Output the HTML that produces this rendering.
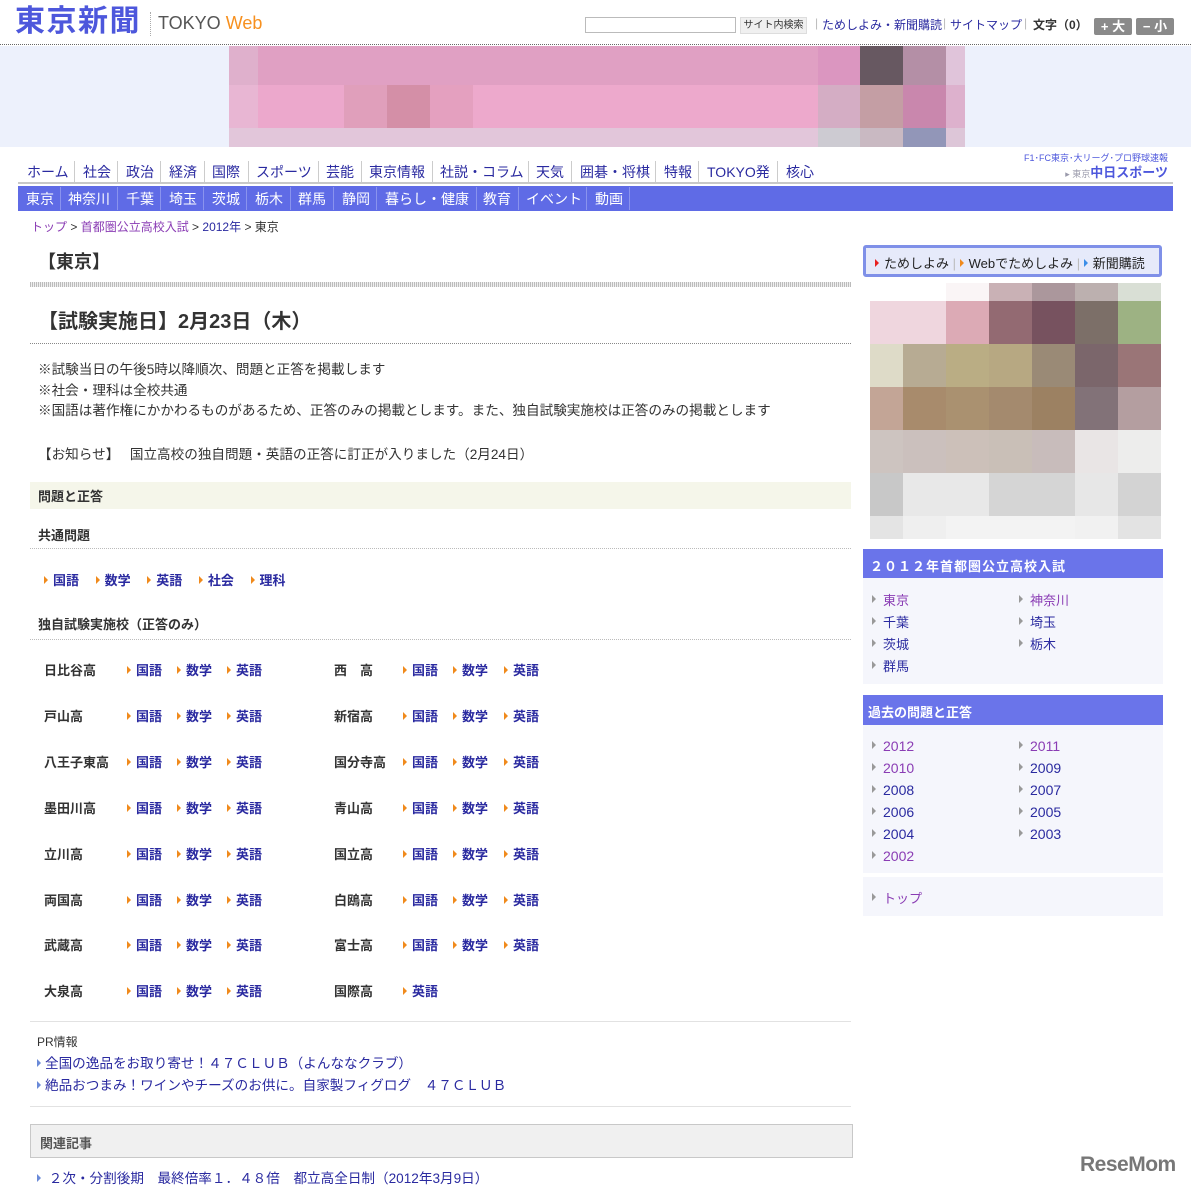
<!DOCTYPE html>
<html><head><meta charset="utf-8">
<style>
*{margin:0;padding:0;box-sizing:border-box}
body{width:1191px;height:1191px;position:relative;background:#fff;font-family:"Liberation Sans","Noto Sans CJK JP",sans-serif;font-size:13px;color:#333;overflow:hidden}
.a{position:absolute;white-space:nowrap}
.lk{color:#2a2aa0}
.vl{color:#8a3cb4}
.b{font-weight:bold}
.arr{display:inline-block;width:0;height:0;border-left:4px solid #f08a1c;border-top:4px solid transparent;border-bottom:4px solid transparent;margin-right:5px;vertical-align:1px}
.garr{display:inline-block;width:0;height:0;border-left:4px solid #999;border-top:4px solid transparent;border-bottom:4px solid transparent;margin-right:7px;vertical-align:2px}
.barr{display:inline-block;width:0;height:0;border-left:4px solid #6a8ad8;border-top:4px solid transparent;border-bottom:4px solid transparent;margin-right:4px;vertical-align:1px}
.px{position:absolute}
.n1{position:absolute;top:162px;font-size:14px;color:#2a2aa0}
.s1{position:absolute;top:161px;width:1px;height:22px;background:#ccc}
.n2{position:absolute;top:189px;font-size:14px;color:#fff}
.s2{position:absolute;top:187px;width:1px;height:23px;background:#8a93ee}
.col{position:absolute;top:648px;font-size:13px;font-weight:bold;line-height:45.9px;white-space:nowrap}
.sch{color:#333}
.sl{color:#2a2aa0}
</style></head><body>

<!-- header -->
<div class="a b" style="left:15px;top:4px;font-size:30px;color:#4d57dc;letter-spacing:1.5px;line-height:36px">東京新聞</div>
<div class="px" style="left:150px;top:12px;height:24px;border-left:1px dotted #aaa"></div>
<div class="a" style="left:158px;top:13px;font-size:18px;color:#555">TOKYO <span style="color:#f7901e">Web</span></div>
<div class="px" style="left:585px;top:17px;width:151px;height:16px;border:1px solid #bbb"></div>
<div class="a" style="left:740px;top:17px;width:67px;height:17px;background:#f0f0f0;border:1px solid #ddd;font-size:10px;color:#333;text-align:center;line-height:15px">サイト内検索</div>
<div class="a" style="left:815px;top:16px;font-size:12px;color:#bbb">|</div>
<div class="a lk" style="left:822px;top:16px;font-size:12px">ためしよみ・新聞購読</div>
<div class="a" style="left:943px;top:16px;font-size:12px;color:#bbb">|</div>
<div class="a lk" style="left:950px;top:16px;font-size:12px">サイトマップ</div>
<div class="a" style="left:1024px;top:16px;font-size:12px;color:#bbb">|</div>
<div class="a b" style="left:1033px;top:16px;font-size:12px;color:#333">文字（0）</div>
<div class="a b" style="left:1094px;top:18px;width:38px;height:17px;background:#8a8a8a;color:#fff;font-size:13px;text-align:center;line-height:17px;border-radius:2px">+ 大</div>
<div class="a b" style="left:1136px;top:18px;width:38px;height:17px;background:#8a8a8a;color:#fff;font-size:13px;text-align:center;line-height:17px;border-radius:2px">− 小</div>
<div class="px" style="left:0;top:44px;width:1191px;border-top:1px dotted #666"></div>

<!-- banner -->
<div class="px" style="left:0;top:46px;width:1191px;height:101px;background:#edf1fc"></div>
<div class="px" style="left:229px;top:46px;width:736px;height:101px;background:#e0a0c3"></div>
<div class="px" style="left:229px;top:46px;width:29px;height:39px;background:#dfb0cc"></div>
<div class="px" style="left:818px;top:46px;width:42px;height:39px;background:#db96c0"></div>
<div class="px" style="left:860px;top:46px;width:43px;height:39px;background:#675861"></div>
<div class="px" style="left:903px;top:46px;width:43px;height:39px;background:#b48fa6"></div>
<div class="px" style="left:946px;top:46px;width:19px;height:39px;background:#e0c4da"></div>
<div class="px" style="left:229px;top:85px;width:29px;height:43px;background:#e8b6d3"></div>
<div class="px" style="left:258px;top:85px;width:86px;height:43px;background:#eca8cc"></div>
<div class="px" style="left:344px;top:85px;width:43px;height:43px;background:#e09fbb"></div>
<div class="px" style="left:387px;top:85px;width:43px;height:43px;background:#d48fa7"></div>
<div class="px" style="left:430px;top:85px;width:43px;height:43px;background:#e4a0bf"></div>
<div class="px" style="left:473px;top:85px;width:345px;height:43px;background:#eda9cc"></div>
<div class="px" style="left:818px;top:85px;width:42px;height:43px;background:#d4adc4"></div>
<div class="px" style="left:860px;top:85px;width:43px;height:43px;background:#c49ea4"></div>
<div class="px" style="left:903px;top:85px;width:43px;height:43px;background:#c987ad"></div>
<div class="px" style="left:946px;top:85px;width:19px;height:43px;background:#ddb1cd"></div>
<div class="px" style="left:229px;top:128px;width:589px;height:19px;background:#e2c6da"></div>
<div class="px" style="left:818px;top:128px;width:42px;height:19px;background:#cdcbd2"></div>
<div class="px" style="left:860px;top:128px;width:43px;height:19px;background:#c9b9c2"></div>
<div class="px" style="left:903px;top:128px;width:43px;height:19px;background:#9296b8"></div>
<div class="px" style="left:946px;top:128px;width:19px;height:19px;background:#ddc6d8"></div>

<!-- nav 1 -->
<div class="n1" style="left:27px">ホーム</div><div class="s1" style="left:74px"></div>
<div class="n1" style="left:83px">社会</div><div class="s1" style="left:117px"></div>
<div class="n1" style="left:126px">政治</div><div class="s1" style="left:160px"></div>
<div class="n1" style="left:169px">経済</div><div class="s1" style="left:204px"></div>
<div class="n1" style="left:212px">国際</div><div class="s1" style="left:248px"></div>
<div class="n1" style="left:256px">スポーツ</div><div class="s1" style="left:318px"></div>
<div class="n1" style="left:326px">芸能</div><div class="s1" style="left:361px"></div>
<div class="n1" style="left:369px">東京情報</div><div class="s1" style="left:432px"></div>
<div class="n1" style="left:440px">社説・コラム</div><div class="s1" style="left:528px"></div>
<div class="n1" style="left:536px">天気</div><div class="s1" style="left:571px"></div>
<div class="n1" style="left:580px">囲碁・将棋</div><div class="s1" style="left:655px"></div>
<div class="n1" style="left:664px">特報</div><div class="s1" style="left:698px"></div>
<div class="n1" style="left:707px">TOKYO発</div><div class="s1" style="left:777px"></div>
<div class="n1" style="left:786px">核心</div>
<div class="a" style="right:23px;top:153px;font-size:9px;color:#4d57dc;line-height:11px">F1･FC東京･大リーグ･プロ野球速報</div>
<div class="a b" style="right:23px;top:165px;font-size:13px;color:#4d57dc;line-height:15px"><span style="font-size:9px;color:#99a;font-weight:normal">▸ 東京</span>中日スポーツ</div>
<div class="px" style="left:18px;top:182px;width:1155px;height:2px;background:#c8c8c8"></div>
<!-- nav 2 -->
<div class="px" style="left:18px;top:186px;width:1155px;height:25px;background:#5f6be6"></div>
<div class="n2" style="left:26px">東京</div><div class="s2" style="left:60px"></div>
<div class="n2" style="left:68px">神奈川</div><div class="s2" style="left:117px"></div>
<div class="n2" style="left:126px">千葉</div><div class="s2" style="left:160px"></div>
<div class="n2" style="left:169px">埼玉</div><div class="s2" style="left:203px"></div>
<div class="n2" style="left:212px">茨城</div><div class="s2" style="left:246px"></div>
<div class="n2" style="left:255px">栃木</div><div class="s2" style="left:290px"></div>
<div class="n2" style="left:298px">群馬</div><div class="s2" style="left:333px"></div>
<div class="n2" style="left:342px">静岡</div><div class="s2" style="left:376px"></div>
<div class="n2" style="left:385px">暮らし・健康</div><div class="s2" style="left:476px"></div>
<div class="n2" style="left:483px">教育</div><div class="s2" style="left:518px"></div>
<div class="n2" style="left:526px">イベント</div><div class="s2" style="left:586px"></div>
<div class="n2" style="left:595px">動画</div><div class="s2" style="left:629px"></div>

<div class="a" style="left:31px;top:218px;font-size:12px;color:#333"><span class="vl">トップ</span> &gt; <span class="vl">首都圏公立高校入試</span> &gt; <span class="lk">2012年</span> &gt; 東京</div>

<!-- main -->
<div class="a b" style="left:38px;top:248px;font-size:18px;color:#333">【東京】</div>
<div class="px" style="left:30px;top:282px;width:821px;height:5px;background:repeating-linear-gradient(90deg,#bbb 0 1px,#eee 1px 2px)"></div>
<div class="a b" style="left:38px;top:305px;font-size:20px;color:#333">【試験実施日】2月23日（木）</div>
<div class="px" style="left:30px;top:343px;width:821px;border-top:1px dotted #888"></div>
<div class="a" style="left:38px;top:360px;font-size:13.6px;line-height:20.5px;color:#333">※試験当日の午後5時以降順次、問題と正答を掲載します<br>※社会・理科は全校共通<br>※国語は著作権にかかわるものがあるため、正答のみの掲載とします。また、独自試験実施校は正答のみの掲載とします</div>
<div class="a" style="left:38px;top:443px;font-size:13.6px;color:#333">【お知らせ】　 国立高校の独自問題・英語の正答に訂正が入りました（2月24日）</div>

<div class="px" style="left:30px;top:482px;width:821px;height:27px;background:#f5f6ea"></div>
<div class="a b" style="left:38px;top:486px;font-size:13px">問題と正答</div>
<div class="a b" style="left:38px;top:525px;font-size:13px">共通問題</div>
<div class="px" style="left:30px;top:548px;width:821px;border-top:1px dotted #bbb"></div>
<div class="a b lk" style="left:44px;top:570px;font-size:13px"><span class="arr"></span>国語　 <span class="arr"></span>数学　 <span class="arr"></span>英語　 <span class="arr"></span>社会　 <span class="arr"></span>理科</div>
<div class="a b" style="left:38px;top:614px;font-size:13px">独自試験実施校（正答のみ）</div>
<div class="px" style="left:30px;top:639px;width:821px;border-top:1px dotted #bbb"></div>

<div class="col sch" style="left:44px">日比谷高<br>戸山高<br>八王子東高<br>墨田川高<br>立川高<br>両国高<br>武蔵高<br>大泉高</div>
<div class="col sch" style="left:334px">西　高<br>新宿高<br>国分寺高<br>青山高<br>国立高<br>白鴎高<br>富士高<br>国際高</div>
<div class="col sl" style="left:127px"><span class="arr"></span>国語<br><span class="arr"></span>国語<br><span class="arr"></span>国語<br><span class="arr"></span>国語<br><span class="arr"></span>国語<br><span class="arr"></span>国語<br><span class="arr"></span>国語<br><span class="arr"></span>国語</div>
<div class="col sl" style="left:177px"><span class="arr"></span>数学<br><span class="arr"></span>数学<br><span class="arr"></span>数学<br><span class="arr"></span>数学<br><span class="arr"></span>数学<br><span class="arr"></span>数学<br><span class="arr"></span>数学<br><span class="arr"></span>数学</div>
<div class="col sl" style="left:227px"><span class="arr"></span>英語<br><span class="arr"></span>英語<br><span class="arr"></span>英語<br><span class="arr"></span>英語<br><span class="arr"></span>英語<br><span class="arr"></span>英語<br><span class="arr"></span>英語<br><span class="arr"></span>英語</div>
<div class="col sl" style="left:403px"><span class="arr"></span>国語<br><span class="arr"></span>国語<br><span class="arr"></span>国語<br><span class="arr"></span>国語<br><span class="arr"></span>国語<br><span class="arr"></span>国語<br><span class="arr"></span>国語<br><span class="arr"></span>英語</div>
<div class="col sl" style="left:453px"><span class="arr"></span>数学<br><span class="arr"></span>数学<br><span class="arr"></span>数学<br><span class="arr"></span>数学<br><span class="arr"></span>数学<br><span class="arr"></span>数学<br><span class="arr"></span>数学</div>
<div class="col sl" style="left:504px"><span class="arr"></span>英語<br><span class="arr"></span>英語<br><span class="arr"></span>英語<br><span class="arr"></span>英語<br><span class="arr"></span>英語<br><span class="arr"></span>英語<br><span class="arr"></span>英語</div>

<div class="px" style="left:30px;top:1021px;width:821px;border-top:1px solid #e2e2e2"></div>
<div class="a" style="left:37px;top:1033px;font-size:12px;color:#333">PR情報</div>
<div class="a lk" style="left:37px;top:1053px;font-size:13.6px;line-height:22px"><span class="barr"></span>全国の逸品をお取り寄せ！４７ＣＬＵＢ（よんななクラブ）<br><span class="barr"></span>絶品おつまみ！ワインやチーズのお供に。自家製フィグログ　４７ＣＬＵＢ</div>
<div class="px" style="left:30px;top:1106px;width:821px;border-top:1px solid #e2e2e2"></div>
<div class="px" style="left:30px;top:1124px;width:823px;height:34px;background:#f0f0f0;border:1px solid #c8c8c8"></div>
<div class="a b" style="left:40px;top:1133px;font-size:13px;color:#555">関連記事</div>
<div class="a lk" style="left:37px;top:1167px;font-size:13.6px"><span class="barr"></span> ２次・分割後期　最終倍率１．４８倍　都立高全日制（2012年3月9日）</div>

<!-- sidebar -->
<div class="px" style="left:863px;top:245px;width:299px;height:32px;background:#e6eafa;border:3px solid #7f90e8;border-radius:3px"></div>
<div class="a" style="left:875px;top:253px;font-size:13px;color:#222"><span class="arr" style="border-left-color:#e82020"></span>ためしよみ <span style="color:#bbb">|</span> <span class="arr"></span>Webでためしよみ <span style="color:#bbb">|</span> <span class="arr" style="border-left-color:#3a8ee8"></span>新聞購読</div>

<div class="px" style="left:870px;top:283px;width:291px;height:256px;display:grid;grid-template-columns:33px 43px 43px 43px 43px 43px 43px;grid-template-rows:18px 43px 43px 43px 43px 43px 23px">
<div style="background:#fff"></div><div style="background:#fff"></div><div style="background:#faf5f6"></div><div style="background:#c9b1b5"></div><div style="background:#ab979c"></div><div style="background:#bcb0af"></div><div style="background:#d9dfd5"></div>
<div style="background:#efd6de"></div><div style="background:#efd6de"></div><div style="background:#dcaab5"></div><div style="background:#936a72"></div><div style="background:#77525f"></div><div style="background:#7c6f68"></div><div style="background:#9db283"></div>
<div style="background:#dedbc8"></div><div style="background:#b7ab93"></div><div style="background:#baad84"></div><div style="background:#b7a882"></div><div style="background:#9a8a76"></div><div style="background:#7b666b"></div><div style="background:#9a7577"></div>
<div style="background:#c3a596"></div><div style="background:#a88b6c"></div><div style="background:#aa9170"></div><div style="background:#a48a6e"></div><div style="background:#9c8162"></div><div style="background:#827278"></div><div style="background:#b49ea0"></div>
<div style="background:#cdc4c0"></div><div style="background:#cbc0bd"></div><div style="background:#ccc0b9"></div><div style="background:#c9bfb7"></div><div style="background:#c8bcbb"></div><div style="background:#e9e5e5"></div><div style="background:#ededec"></div>
<div style="background:#c8c8c8"></div><div style="background:#e8e8e8"></div><div style="background:#e8e8e8"></div><div style="background:#d5d5d5"></div><div style="background:#d5d5d5"></div><div style="background:#e7e7e7"></div><div style="background:#d3d3d3"></div>
<div style="background:#e4e4e4"></div><div style="background:#efefef"></div><div style="background:#f3f3f3"></div><div style="background:#f3f3f3"></div><div style="background:#f3f3f3"></div><div style="background:#f1f1f1"></div><div style="background:#e3e3e3"></div>
</div>

<div class="px" style="left:863px;top:549px;width:300px;height:29px;background:#6a74ea"></div>
<div class="a b" style="left:870px;top:556px;font-size:13px;color:#fff;letter-spacing:1px">２０１２年首都圏公立高校入試</div>
<div class="px" style="left:863px;top:578px;width:300px;height:106px;background:#f5f6fc"></div>
<div class="a" style="left:872px;top:590px;font-size:13px;line-height:22px"><span class="garr"></span><span class="vl">東京</span><br><span class="garr"></span><span class="lk">千葉</span><br><span class="garr"></span><span class="lk">茨城</span><br><span class="garr"></span><span class="lk">群馬</span></div>
<div class="a" style="left:1019px;top:590px;font-size:13px;line-height:22px"><span class="garr"></span><span class="vl">神奈川</span><br><span class="garr"></span><span class="lk">埼玉</span><br><span class="garr"></span><span class="lk">栃木</span></div>

<div class="px" style="left:863px;top:695px;width:300px;height:30px;background:#6a74ea"></div>
<div class="a b" style="left:868px;top:702px;font-size:13px;color:#fff">過去の問題と正答</div>
<div class="px" style="left:863px;top:725px;width:300px;height:148px;background:#f5f6fc"></div>
<div class="a" style="left:872px;top:735px;font-size:14px;line-height:22px"><span class="garr"></span><span class="vl">2012</span><br><span class="garr"></span><span class="vl">2010</span><br><span class="garr"></span><span class="lk">2008</span><br><span class="garr"></span><span class="lk">2006</span><br><span class="garr"></span><span class="lk">2004</span><br><span class="garr"></span><span class="vl">2002</span></div>
<div class="a" style="left:1019px;top:735px;font-size:14px;line-height:22px"><span class="garr"></span><span class="vl">2011</span><br><span class="garr"></span><span class="lk">2009</span><br><span class="garr"></span><span class="lk">2007</span><br><span class="garr"></span><span class="lk">2005</span><br><span class="garr"></span><span class="lk">2003</span></div>
<div class="px" style="left:863px;top:877px;width:300px;height:39px;background:#f5f6fc"></div>
<div class="a" style="left:872px;top:888px;font-size:13px"><span class="garr"></span><span class="vl">トップ</span></div>

<div class="a b" style="left:1080px;top:1153px;font-size:21px;color:#777;letter-spacing:-0.5px">ReseMom</div>
</body></html>
